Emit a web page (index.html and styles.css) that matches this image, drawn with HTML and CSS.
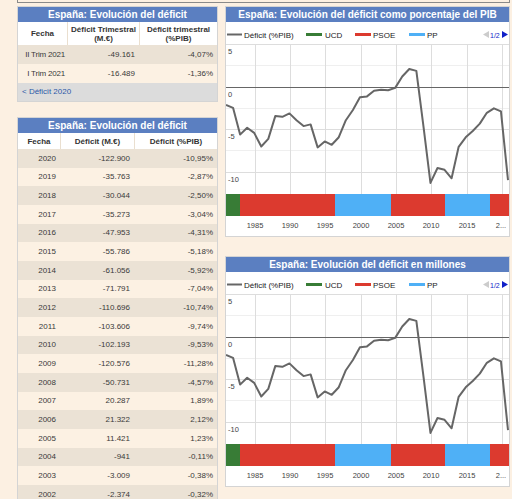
FILE: index.html
```html
<!DOCTYPE html>
<html lang="es">
<head>
<meta charset="utf-8">
<title>España: Evolución del déficit</title>
<link rel="stylesheet" href="styles.css">
</head>
<body>
<div class="page">
  <div class="topbox"></div>
  <div class="layout">
    <div class="leftcol">
      <div class="panel t1">
        <div class="ptitle">España: Evolución del déficit</div>
        <div class="row head">
          <div class="cell">Fecha</div>
          <div class="cell">Déficit Trimestral<br>(M.€)</div>
          <div class="cell">Déficit trimestral<br>(%PIB)</div>
        </div>
        <div class="row body dark"><div class="cell">II Trim 2021</div><div class="cell">-49.161</div><div class="cell">-4,07%</div></div>
        <div class="row body light"><div class="cell">I Trim 2021</div><div class="cell">-16.489</div><div class="cell">-1,36%</div></div>
        <div class="foot">&lt; Déficit 2020</div>
      </div>
      <div class="panel t2">
        <div class="ptitle">España: Evolución del déficit</div>
        <div class="row head">
          <div class="cell">Fecha</div>
          <div class="cell">Déficit (M.€)</div>
          <div class="cell">Déficit (%PIB)</div>
        </div>
        <div class="row body dark"><div class="cell">2020</div><div class="cell">-122.900</div><div class="cell">-10,95%</div></div>
        <div class="row body light"><div class="cell">2019</div><div class="cell">-35.763</div><div class="cell">-2,87%</div></div>
        <div class="row body dark"><div class="cell">2018</div><div class="cell">-30.044</div><div class="cell">-2,50%</div></div>
        <div class="row body light"><div class="cell">2017</div><div class="cell">-35.273</div><div class="cell">-3,04%</div></div>
        <div class="row body dark"><div class="cell">2016</div><div class="cell">-47.953</div><div class="cell">-4,31%</div></div>
        <div class="row body light"><div class="cell">2015</div><div class="cell">-55.786</div><div class="cell">-5,18%</div></div>
        <div class="row body dark"><div class="cell">2014</div><div class="cell">-61.056</div><div class="cell">-5,92%</div></div>
        <div class="row body light"><div class="cell">2013</div><div class="cell">-71.791</div><div class="cell">-7,04%</div></div>
        <div class="row body dark"><div class="cell">2012</div><div class="cell">-110.696</div><div class="cell">-10,74%</div></div>
        <div class="row body light"><div class="cell">2011</div><div class="cell">-103.606</div><div class="cell">-9,74%</div></div>
        <div class="row body dark"><div class="cell">2010</div><div class="cell">-102.193</div><div class="cell">-9,53%</div></div>
        <div class="row body light"><div class="cell">2009</div><div class="cell">-120.576</div><div class="cell">-11,28%</div></div>
        <div class="row body dark"><div class="cell">2008</div><div class="cell">-50.731</div><div class="cell">-4,57%</div></div>
        <div class="row body light"><div class="cell">2007</div><div class="cell">20.287</div><div class="cell">1,89%</div></div>
        <div class="row body dark"><div class="cell">2006</div><div class="cell">21.322</div><div class="cell">2,12%</div></div>
        <div class="row body light"><div class="cell">2005</div><div class="cell">11.421</div><div class="cell">1,23%</div></div>
        <div class="row body dark"><div class="cell">2004</div><div class="cell">-941</div><div class="cell">-0,11%</div></div>
        <div class="row body light"><div class="cell">2003</div><div class="cell">-3.009</div><div class="cell">-0,38%</div></div>
        <div class="row body dark"><div class="cell">2002</div><div class="cell">-2.374</div><div class="cell">-0,32%</div></div>
      </div>
    </div>
    <div class="rightcol">
      <div class="panel chartpanel">
        <div class="ptitle">España: Evolución del déficit como porcentaje del PIB</div>
        <svg class="chart" width="283" height="214" viewBox="0 0 283 214">
          <g class="legend">
            <line x1="1" y1="12.5" x2="16" y2="12.5" stroke="#666" stroke-width="2"/>
            <text x="18" y="16">Déficit (%PIB)</text>
            <rect x="80" y="11" width="16" height="3" fill="#387c36"/>
            <text x="99" y="16">UCD</text>
            <rect x="129" y="11" width="16" height="3" fill="#dc3a2f"/>
            <text x="147" y="16">PSOE</text>
            <rect x="183" y="11" width="16" height="3" fill="#4fb0f6"/>
            <text x="201" y="16">PP</text>
            <path d="M257 12.5 L263 9 L263 16 Z" fill="#cccccc"/>
            <text x="264" y="16" class="pager">1/2</text>
            <path d="M276 9 L282 12.5 L276 16 Z" fill="#1020c8"/>
          </g>
          <g stroke="#efefef" stroke-width="1">
            <line x1="0" y1="43.5" x2="283" y2="43.5"/>
            <line x1="0" y1="86.5" x2="283" y2="86.5"/>
            <line x1="0" y1="128.5" x2="283" y2="128.5"/>
          </g>
          <g stroke="#dddddd" stroke-width="1">
            <line x1="0" y1="22.5" x2="283" y2="22.5"/>
            <line x1="0" y1="107.5" x2="283" y2="107.5"/>
            <line x1="0" y1="150.5" x2="283" y2="150.5"/>
            <line x1="29.5" y1="22" x2="29.5" y2="172"/>
            <line x1="64.5" y1="22" x2="64.5" y2="172"/>
            <line x1="99.5" y1="22" x2="99.5" y2="172"/>
            <line x1="135.5" y1="22" x2="135.5" y2="172"/>
            <line x1="170.5" y1="22" x2="170.5" y2="172"/>
            <line x1="205.5" y1="22" x2="205.5" y2="172"/>
            <line x1="241.5" y1="22" x2="241.5" y2="172"/>
            <line x1="276.5" y1="22" x2="276.5" y2="172"/>
          </g>
          <line x1="0" y1="65.5" x2="283" y2="65.5" stroke="#666" stroke-width="1"/>
          <g class="ylab">
            <text x="2" y="32">5</text>
            <text x="2" y="75">0</text>
            <text x="2" y="117">-5</text>
            <text x="2" y="160">-10</text>
          </g>
          <polyline fill="none" stroke="#666" stroke-width="2" stroke-linejoin="round" points="0,82.9 7.05,85.8 14.1,112.6 21.15,105.8 28.2,110.9 35.25,124.5 42.3,116.9 49.35,93.9 56.4,94.8 63.45,91.4 70.5,98.2 77.55,104.1 84.6,102.4 91.65,125.4 98.7,119.4 105.75,122.8 112.8,115.2 119.85,98.2 126.9,88 133.95,75.2 141,74.4 148.05,68.8 155.1,67.7 162.15,68.2 169.2,65.9 176.25,54.5 183.3,47 190.35,48.9 197.4,103.8 204.45,160.9 211.5,146 218.55,147.8 225.6,156.3 232.65,124.8 239.7,115.3 246.75,109 253.8,101.6 260.85,90.8 267.9,86.3 274.95,89.4 282,158.1"/>
          <rect x="0" y="172" width="14" height="22" fill="#387c36"/>
          <rect x="14" y="172" width="95" height="22" fill="#dc3a2f"/>
          <rect x="109" y="172" width="56" height="22" fill="#4fb0f6"/>
          <rect x="165" y="172" width="54" height="22" fill="#dc3a2f"/>
          <rect x="219" y="172" width="45" height="22" fill="#4fb0f6"/>
          <rect x="264" y="172" width="19" height="22" fill="#dc3a2f"/>
          <g class="xlab">
            <text x="29" y="206">1985</text>
            <text x="64" y="206">1990</text>
            <text x="99" y="206">1995</text>
            <text x="135" y="206">2000</text>
            <text x="170" y="206">2005</text>
            <text x="205" y="206">2010</text>
            <text x="241" y="206">2015</text>
            <text x="275" y="206">2...</text>
          </g>
        </svg>
      </div>
      <div class="panel chartpanel">
        <div class="ptitle">España: Evolución del déficit en millones</div>
        <svg class="chart" width="283" height="214" viewBox="0 0 283 214">
          <g class="legend">
            <line x1="1" y1="12.5" x2="16" y2="12.5" stroke="#666" stroke-width="2"/>
            <text x="18" y="16">Déficit (%PIB)</text>
            <rect x="80" y="11" width="16" height="3" fill="#387c36"/>
            <text x="99" y="16">UCD</text>
            <rect x="129" y="11" width="16" height="3" fill="#dc3a2f"/>
            <text x="147" y="16">PSOE</text>
            <rect x="183" y="11" width="16" height="3" fill="#4fb0f6"/>
            <text x="201" y="16">PP</text>
            <path d="M257 12.5 L263 9 L263 16 Z" fill="#cccccc"/>
            <text x="264" y="16" class="pager">1/2</text>
            <path d="M276 9 L282 12.5 L276 16 Z" fill="#1020c8"/>
          </g>
          <g stroke="#efefef" stroke-width="1">
            <line x1="0" y1="43.5" x2="283" y2="43.5"/>
            <line x1="0" y1="86.5" x2="283" y2="86.5"/>
            <line x1="0" y1="128.5" x2="283" y2="128.5"/>
          </g>
          <g stroke="#dddddd" stroke-width="1">
            <line x1="0" y1="22.5" x2="283" y2="22.5"/>
            <line x1="0" y1="107.5" x2="283" y2="107.5"/>
            <line x1="0" y1="150.5" x2="283" y2="150.5"/>
            <line x1="29.5" y1="22" x2="29.5" y2="172"/>
            <line x1="64.5" y1="22" x2="64.5" y2="172"/>
            <line x1="99.5" y1="22" x2="99.5" y2="172"/>
            <line x1="135.5" y1="22" x2="135.5" y2="172"/>
            <line x1="170.5" y1="22" x2="170.5" y2="172"/>
            <line x1="205.5" y1="22" x2="205.5" y2="172"/>
            <line x1="241.5" y1="22" x2="241.5" y2="172"/>
            <line x1="276.5" y1="22" x2="276.5" y2="172"/>
          </g>
          <line x1="0" y1="65.5" x2="283" y2="65.5" stroke="#666" stroke-width="1"/>
          <g class="ylab">
            <text x="2" y="32">5</text>
            <text x="2" y="75">0</text>
            <text x="2" y="117">-5</text>
            <text x="2" y="160">-10</text>
          </g>
          <polyline fill="none" stroke="#666" stroke-width="2" stroke-linejoin="round" points="0,82.9 7.05,85.8 14.1,112.6 21.15,105.8 28.2,110.9 35.25,124.5 42.3,116.9 49.35,93.9 56.4,94.8 63.45,91.4 70.5,98.2 77.55,104.1 84.6,102.4 91.65,125.4 98.7,119.4 105.75,122.8 112.8,115.2 119.85,98.2 126.9,88 133.95,75.2 141,74.4 148.05,68.8 155.1,67.7 162.15,68.2 169.2,65.9 176.25,54.5 183.3,47 190.35,48.9 197.4,103.8 204.45,160.9 211.5,146 218.55,147.8 225.6,156.3 232.65,124.8 239.7,115.3 246.75,109 253.8,101.6 260.85,90.8 267.9,86.3 274.95,89.4 282,158.1"/>
          <rect x="0" y="172" width="14" height="22" fill="#387c36"/>
          <rect x="14" y="172" width="95" height="22" fill="#dc3a2f"/>
          <rect x="109" y="172" width="56" height="22" fill="#4fb0f6"/>
          <rect x="165" y="172" width="54" height="22" fill="#dc3a2f"/>
          <rect x="219" y="172" width="45" height="22" fill="#4fb0f6"/>
          <rect x="264" y="172" width="19" height="22" fill="#dc3a2f"/>
          <g class="xlab">
            <text x="29" y="206">1985</text>
            <text x="64" y="206">1990</text>
            <text x="99" y="206">1995</text>
            <text x="135" y="206">2000</text>
            <text x="170" y="206">2005</text>
            <text x="205" y="206">2010</text>
            <text x="241" y="206">2015</text>
            <text x="275" y="206">2...</text>
          </g>
        </svg>
      </div>
    </div>
  </div>
</div>
</body>
</html>
```
FILE: styles.css
```css
* { box-sizing: border-box; }
body {
  margin: 0;
  background: #fcf0e2;
  font-family: "Liberation Sans", Arial, sans-serif;
  color: #333;
}
.page {
  padding-left: 17px;
  width: 510px;
}
.topbox {
  height: 3px;
  border: 1px solid #8a8a8a;
  border-top: none;
  margin-bottom: 3px;
}
.layout {
  display: flex;
  gap: 7px;
  align-items: flex-start;
}
.leftcol {
  width: 201px;
  display: flex;
  flex-direction: column;
  gap: 15px;
}
.rightcol {
  width: 285px;
  display: flex;
  flex-direction: column;
  gap: 19px;
}
.panel {
  border: 1px solid #d4d4d4;
}
.ptitle {
  height: 15px;
  background: #5b7fc1;
  color: #fff;
  font-weight: bold;
  font-size: 10px;
  line-height: 15px;
  text-align: center;
  white-space: nowrap;
}
.row {
  display: grid;
}
.t1 .row { grid-template-columns: 49px 72px 78px; }
.t2 .row { grid-template-columns: 42px 74px 83px; }
.cell {
  display: flex;
  align-items: center;
  justify-content: flex-end;
  padding-right: 4px;
  font-size: 8px;
  white-space: nowrap;
  color: #3a3a3a;
  min-width: 0;
}
.t1 .body .cell:first-child {
  padding-right: 2px;
  letter-spacing: -0.2px;
}
.head {
  background: #fff;
}
.head .cell {
  justify-content: center;
  text-align: center;
  font-weight: bold;
  padding: 0;
  line-height: 9px;
  color: #333;
  border-left: 1px solid #eadfcf;
}
.head .cell:first-child { border-left: none; }
.t1 .head { height: 23px; }
.t2 .head { height: 16px; }
.t1 .body { height: 19px; }
.t2 .body { height: 18.67px; }
.dark { background: #ebe2d5; }
.light { background: #fcf1e3; }
.foot {
  height: 18px;
  background: #dcdcdc;
  font-size: 8px;
  line-height: 18px;
  padding-left: 4px;
  color: #2c5aa8;
}
.chartpanel {
  background: #fff;
}
.chart {
  display: block;
  font-family: "Liberation Sans", Arial, sans-serif;
}
.legend text {
  font-size: 8px;
  fill: #222;
}
.legend .pager {
  font-size: 7px;
  fill: #1020c8;
}
.ylab text {
  font-size: 7.5px;
  fill: #444;
}
.xlab text {
  font-size: 7.5px;
  fill: #444;
  text-anchor: middle;
}
```
